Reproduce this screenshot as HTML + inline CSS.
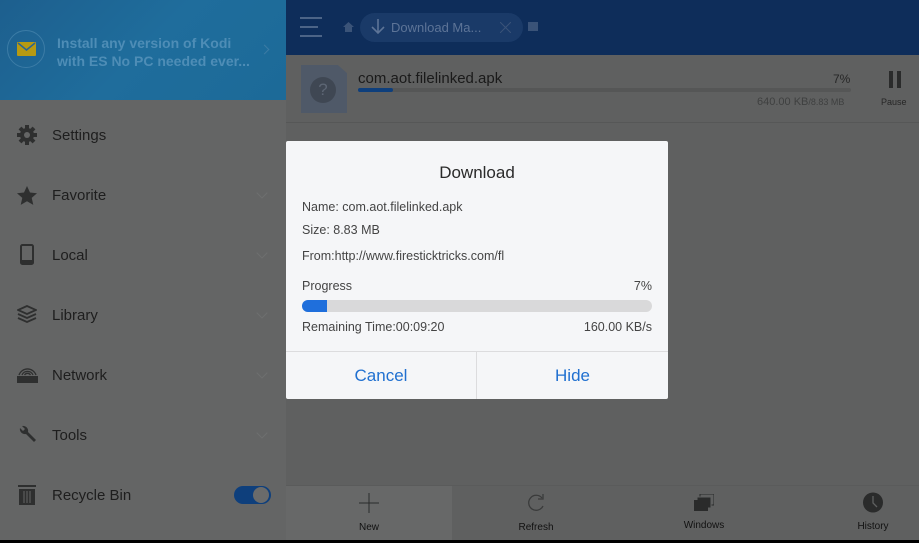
<!DOCTYPE html>
<html><head><meta charset="utf-8"><style>
*{margin:0;padding:0;box-sizing:border-box}
body{width:919px;height:543px;overflow:hidden;background:#000;font-family:"Liberation Sans",sans-serif;position:relative}
.abs{position:absolute}
#side{left:0;top:0;width:286px;height:540px;background:#646565}
#sidehead{left:0;top:0;width:286px;height:100px;background:linear-gradient(135deg,#1d5f8e 0%,#1f6d9c 50%,#1c6a98 100%)}
#main{left:286px;top:0;width:633px;height:540px;background:#5f6060}
#top{left:286px;top:0;width:633px;height:55px;background:#0e2d5a}
.item{position:absolute;left:52px;font-size:15px;color:#1e1e1e}
.ico{position:absolute;left:17px}
.chev{position:absolute;left:258px;width:8px;height:8px;border-right:1px solid #6e6f6f;border-bottom:1px solid #6e6f6f;transform:rotate(45deg)}
#dlg{left:286px;top:141px;width:382px;height:258px;background:#f5f6f8;border-radius:2px}
.dt{position:absolute;left:16px;font-size:12.5px;color:#444}
.bot{position:absolute;top:486px;height:54px;text-align:center;font-size:10px;color:#111}
</style></head><body>
<div id="side" class="abs"></div>
<div id="sidehead" class="abs">
 <div class="abs" style="left:7px;top:30px;width:38px;height:38px;border-radius:50%;border:1px solid #3c7ca6"></div>
 <div class="abs" style="left:17px;top:42px;width:19px;height:14px;background:#b79a12;border-radius:1px"></div>
 <svg class="abs" style="left:17px;top:42px" width="19" height="14"><path d="M1 1 L9.5 8 L18 1" stroke="#2a6592" stroke-width="1.5" fill="none"/></svg>
 <div class="abs" style="left:57px;top:34px;font-size:14px;font-weight:bold;color:#4e8db6;line-height:18px">Install any version of Kodi<br>with ES No PC needed ever...</div>
 <div class="abs" style="left:261px;top:46px;width:7px;height:7px;border-right:1px solid #3b7ba5;border-top:1px solid #3b7ba5;transform:rotate(45deg)"></div>
</div>
<svg class="ico" style="top:125px" width="20" height="20" viewBox="0 0 20 20"><circle cx="10" cy="10" r="7" fill="#2e2f2f"/><g stroke="#2e2f2f" stroke-width="4"><path d="M10 0v20M0 10h20M3 3l14 14M17 3L3 17"/></g><circle cx="10" cy="10" r="3" fill="#646565"/></svg>
<div class="item" style="top:127px">Settings</div>
<svg class="ico" style="top:186px" width="20" height="19" viewBox="0 0 20 19"><path d="M10 0l3 6.5 7 .7-5.3 4.7 1.6 7L10 15.3 3.7 18.9l1.6-7L0 7.2l7-.7z" fill="#2e2f2f"/></svg>
<div class="item" style="top:187px">Favorite</div><div class="chev" style="top:189px"></div>
<svg class="ico" style="top:244px;left:20px" width="14" height="21"><rect x="1" y="1" width="12" height="19" rx="1.5" fill="none" stroke="#2e2f2f" stroke-width="2"/><rect x="1" y="16" width="12" height="4" fill="#2e2f2f"/></svg>
<div class="item" style="top:247px">Local</div><div class="chev" style="top:249px"></div>
<svg class="ico" style="top:305px" width="20" height="20"><path d="M10 1L1 5l9 4 9-4z M1 9l9 4 9-4 M1 13l9 4 9-4" fill="none" stroke="#2e2f2f" stroke-width="1.8"/></svg>
<div class="item" style="top:307px">Library</div><div class="chev" style="top:309px"></div>
<svg class="ico" style="top:366px" width="21" height="18"><path d="M5 9a6 6 0 0 1 11 0M7.5 9a3.5 3.5 0 0 1 6 0M2 9a9 9 0 0 1 17 0" fill="none" stroke="#2e2f2f" stroke-width="1.3"/><rect x="0" y="10" width="21" height="7" fill="#2e2f2f"/></svg>
<div class="item" style="top:367px">Network</div><div class="chev" style="top:369px"></div>
<svg class="ico" style="top:425px" width="20" height="20"><path d="M3 3a5 5 0 0 0 6 6l8 8 2-2-8-8a5 5 0 0 0-6-6l3 3-2 2z" fill="#2e2f2f"/></svg>
<div class="item" style="top:427px">Tools</div><div class="chev" style="top:429px"></div>
<svg class="ico" style="top:484px" width="20" height="22"><rect x="1" y="1" width="18" height="2" fill="#2e2f2f"/><rect x="2" y="5" width="16" height="16" fill="#2e2f2f"/><path d="M7 7v12M10 7v12M13 7v12" stroke="#646565" stroke-width="1"/></svg>
<div class="item" style="top:487px">Recycle Bin</div>
<div class="abs" style="left:234px;top:486px;width:37px;height:18px;border-radius:9px;background:#0e3f7c"></div>
<div class="abs" style="left:253px;top:487px;width:16px;height:16px;border-radius:50%;background:#6a6b6b"></div>

<div id="main" class="abs"></div>
<div id="top" class="abs">
 <div class="abs" style="left:14px;top:17px;width:22px;height:2px;background:#4c6487"></div>
 <div class="abs" style="left:14px;top:26px;width:18px;height:2px;background:#4c6487"></div>
 <div class="abs" style="left:14px;top:35px;width:22px;height:2px;background:#4c6487"></div>
 <svg class="abs" style="left:57px;top:22px" width="11" height="10"><path d="M5.5 0L0 5h2v5h7V5h2z" fill="#3a5378"/></svg>
 <div class="abs" style="left:74px;top:13px;width:163px;height:29px;border-radius:15px;background:#1a3a68"></div>
 <svg class="abs" style="left:85px;top:19px" width="14" height="16"><path d="M7 0v14M1 8l6 6 6-6" fill="none" stroke="#5d7497" stroke-width="1.6"/></svg>
 <div class="abs" style="left:105px;top:20px;font-size:13px;color:#5d7497">Download Ma...</div>
 <svg class="abs" style="left:214px;top:22px" width="11" height="11"><path d="M0 0l11 11M11 0L0 11" stroke="#3a5378" stroke-width="1"/></svg>
 <div class="abs" style="left:242px;top:22px;width:10px;height:9px;background:#3a5378"></div>
</div>
<div class="abs" style="left:286px;top:122px;width:633px;height:1px;background:#565757"></div>
<div class="abs" style="left:301px;top:65px;width:46px;height:48px;background:#4f5968;clip-path:polygon(0 0,80% 0,100% 17%,100% 100%,0 100%)"></div>
<div class="abs" style="left:310px;top:77px;width:26px;height:26px;border-radius:50%;background:#3f4753;color:#5d6674;font-size:17px;text-align:center;line-height:26px">?</div>
<div class="abs" style="left:358px;top:70px;font-size:15px;color:#1a1a1a">com.aot.filelinked.apk</div>
<div class="abs" style="left:358px;top:88px;width:493px;height:4px;border-radius:2px;background:#555656"></div>
<div class="abs" style="left:358px;top:88px;width:35px;height:4px;border-radius:2px;background:#0e3f7c"></div>
<div class="abs" style="left:833px;top:72px;font-size:12px;color:#262626">7%</div>
<div class="abs" style="left:757px;top:96px;font-size:11px;color:#3f4040">640.00 KB<span style="font-size:9px">/8.83 MB</span></div>
<div class="abs" style="left:889px;top:71px;width:4px;height:17px;background:#2a2b2b"></div>
<div class="abs" style="left:897px;top:71px;width:4px;height:17px;background:#2a2b2b"></div>
<div class="abs" style="left:881px;top:97px;font-size:9px;color:#262626">Pause</div>

<div class="abs" style="left:286px;top:485px;width:633px;height:1px;background:#5a5b5b"></div>
<div class="abs" style="left:286px;top:486px;width:166px;height:54px;background:#676868"></div>
<div class="bot" style="left:286px;width:166px"><svg style="margin-top:7px" width="20" height="20"><path d="M10 0v20M0 10h20" stroke="#2a2b2b" stroke-width="1"/></svg><div style="margin-top:6px">New</div></div>
<div class="bot" style="left:452px;width:168px"><svg style="margin-top:7px" width="20" height="20"><path d="M16 5A7.5 7.5 0 1 0 17 13" fill="none" stroke="#3a3b3b" stroke-width="1.3"/><path d="M17 1v5h-5" fill="none" stroke="#3a3b3b" stroke-width="1.3"/></svg><div style="margin-top:6px">Refresh</div></div>
<div class="bot" style="left:620px;width:168px"><svg style="margin-top:8px" width="20" height="18"><rect x="6" y="0" width="14" height="11" fill="none" stroke="#2a2b2b"/><rect x="3" y="3" width="14" height="11" fill="#2a2b2b" stroke="#5f6060"/><rect x="0" y="6" width="14" height="11" fill="#2a2b2b"/></svg><div style="margin-top:5px">Windows</div></div>
<div class="bot" style="left:788px;width:170px"><svg style="margin-top:6px" width="20" height="21"><circle cx="10" cy="10.5" r="10" fill="#2a2b2b"/><path d="M10 4v7l4 4" fill="none" stroke="#5f6060" stroke-width="1.3"/></svg><div style="margin-top:5px">History</div></div>

<div id="dlg" class="abs">
 <div class="abs" style="left:0;top:22px;width:382px;text-align:center;font-size:17px;color:#2a2a2a">Download</div>
 <div class="dt" style="top:59px">Name: com.aot.filelinked.apk</div>
 <div class="dt" style="top:82px">Size: 8.83 MB</div>
 <div class="dt" style="top:108px">From:http://www.firesticktricks.com/fl</div>
 <div class="dt" style="top:138px">Progress</div>
 <div class="dt" style="left:auto;right:16px;top:138px">7%</div>
 <div class="abs" style="left:16px;top:159px;width:350px;height:12px;border-radius:6px;background:#d9d9da"></div>
 <div class="abs" style="left:16px;top:159px;width:25px;height:12px;border-radius:6px 0 0 6px;background:#1f6fdc"></div>
 <div class="dt" style="top:179px">Remaining Time:00:09:20</div>
 <div class="dt" style="left:auto;right:16px;top:179px">160.00 KB/s</div>
 <div class="abs" style="left:0;top:210px;width:382px;height:1px;background:#dcdcde"></div>
 <div class="abs" style="left:190px;top:211px;width:1px;height:47px;background:#dcdcde"></div>
 <div class="abs" style="left:0;top:225px;width:190px;text-align:center;font-size:17px;color:#2070d0">Cancel</div>
 <div class="abs" style="left:191px;top:225px;width:191px;text-align:center;font-size:17px;color:#2070d0">Hide</div>
</div>
</body></html>
